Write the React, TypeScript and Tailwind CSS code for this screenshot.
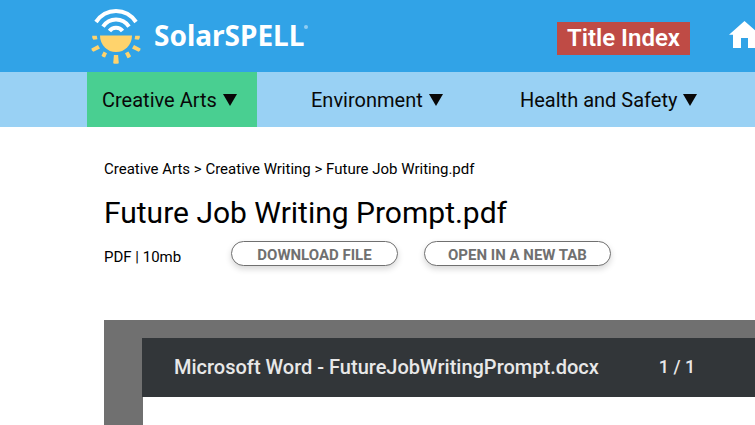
import React from "react";

const topics = [
  { name: "Creative Arts", active: true },
  { name: "Environment", active: false },
  { name: "Health and Safety", active: false },
];

function SunLogo() {
  return (
    <svg width="51" height="56" viewBox="0 0 51 56" aria-hidden="true">
      <g fill="none" stroke="#fff" strokeWidth="4">
        <path d="M5 14C15-.6 35-.6 45 14" />
        <path d="M12 18.600C18.500 9.200 31.500 9.200 38 18.600" />
        <path d="M18.500 23C21.700 18.600 28.300 18.600 31.500 23" />
      </g>
      <path d="M9 27.500h32a16 16.500 0 0 1-32 0z" fill="#ffd36c" />
      <g fill="#ffd36c">
        <path d="M1.200 27.700h4.600l.6 3.600-4 .4q-1.700-2-1.200-4z" />
        <path d="M48.800 27.700h-4.600l-.6 3.600 4 .4q1.700-2 1.200-4z" />
        <path d="M7 37l2 3.400-6.600 3.400q-2-1.200-2-3.400z" />
        <path d="M43 37l-2 3.400 6.600 3.400q2-1.200 2-3.400z" />
        <path d="M12.600 43.600l3.400 1.600-1.900 4.200q-2.200 0-3.600-1.700z" />
        <path d="M37.400 43.600l-3.400 1.600 2.500 5q2.200-.3 3.600-2z" />
        <path d="M22.900 47h4.200l.7 8.300q-2.800 1-5.600 0z" />
      </g>
    </svg>
  );
}

function HomeIcon() {
  return (
    <svg width="31" height="27" viewBox="0 0 31 27" fill="#fff" aria-hidden="true">
      <path d="M15.500 0 31 13.800h-4V27h-8V17h-7v10H4V13.800H0z" />
    </svg>
  );
}

function Triangle() {
  return (
    <svg width="14" height="12" viewBox="0 0 14 12" className="shrink-0" aria-hidden="true">
      <path d="M0 0h14L7 12z" fill="#080808" />
    </svg>
  );
}

export default function App() {
  const pill =
    "flex h-[25px] items-center justify-center rounded-full border border-[#707070] bg-white pt-[3px] text-[15px] leading-5 font-bold text-[#707070] shadow-[0_3px_6px_rgba(0,0,0,0.16)]";
  return (
    <div className="min-h-screen overflow-hidden bg-white font-['Roboto',sans-serif] text-black">
      <header className="flex h-18 items-center justify-between bg-[#31a3e7] pl-[91px]">
        <a href="#home" className="flex items-center gap-3">
          <SunLogo />
          <span className="flex pb-0.5 text-[28px] leading-8 font-bold text-white font-['Noto_Sans',sans-serif]">
            SolarSPELL
            <span className="mt-1.5 size-1 rounded-full bg-[#8fcdf3]" />
          </span>
        </a>
        <div className="-mr-[5px] flex shrink-0 items-center gap-[39px]">
          <button className="mt-1 h-[33px] bg-[#bf4b45] px-2.5 text-2xl leading-8 font-semibold text-white">
            Title Index
          </button>
          <a href="#home" aria-label="Home" className="-mt-1">
            <HomeIcon />
          </a>
        </div>
      </header>

      <nav className="flex h-[55px] overflow-hidden bg-[#99d1f4] pl-[87px]">
        {topics.map((t) => (
          <div key={t.name} className="w-[209px] shrink-0">
            <button
              className={`flex h-full min-w-[170px] items-center gap-1.5 px-[15px] text-xl whitespace-nowrap text-[#080808] ${
                t.active ? "bg-[#49cf91]" : ""
              }`}
            >
              {t.name}
              <Triangle />
            </button>
          </div>
        ))}
      </nav>

      <main className="pl-26">
        <nav aria-label="Breadcrumb" className="pt-8 text-[15px] leading-5">
          <a href="#arts">Creative Arts</a> &gt; <a href="#writing">Creative Writing</a> &gt;{" "}
          <span>Future Job Writing.pdf</span>
        </nav>
        <h1 className="mt-4 text-[30px] leading-9">Future Job Writing Prompt.pdf</h1>
        <div className="mt-2.5 flex items-start">
          <span className="mt-1.5 w-[127px] text-[15px] leading-5">PDF | 10mb</span>
          <div className="flex gap-[26px]">
            <button className={`${pill} w-[167px]`}>DOWNLOAD FILE</button>
            <button className={`${pill} w-[187px]`}>OPEN IN A NEW TAB</button>
          </div>
        </div>

        <section className="mt-[53px] min-h-[105px] bg-[#707070] pt-[18px] pl-[38px]">
          <div className="flex h-[59px] items-center gap-[60px] bg-[#323639] pb-0.5 pl-8 text-[#e8e8e8]">
            <h2 className="text-xl font-medium">Microsoft Word - FutureJobWritingPrompt.docx</h2>
            <span className="text-lg font-medium">1 / 1</span>
          </div>
          <div className="ml-px h-7 bg-white" />
        </section>
      </main>
    </div>
  );
}
